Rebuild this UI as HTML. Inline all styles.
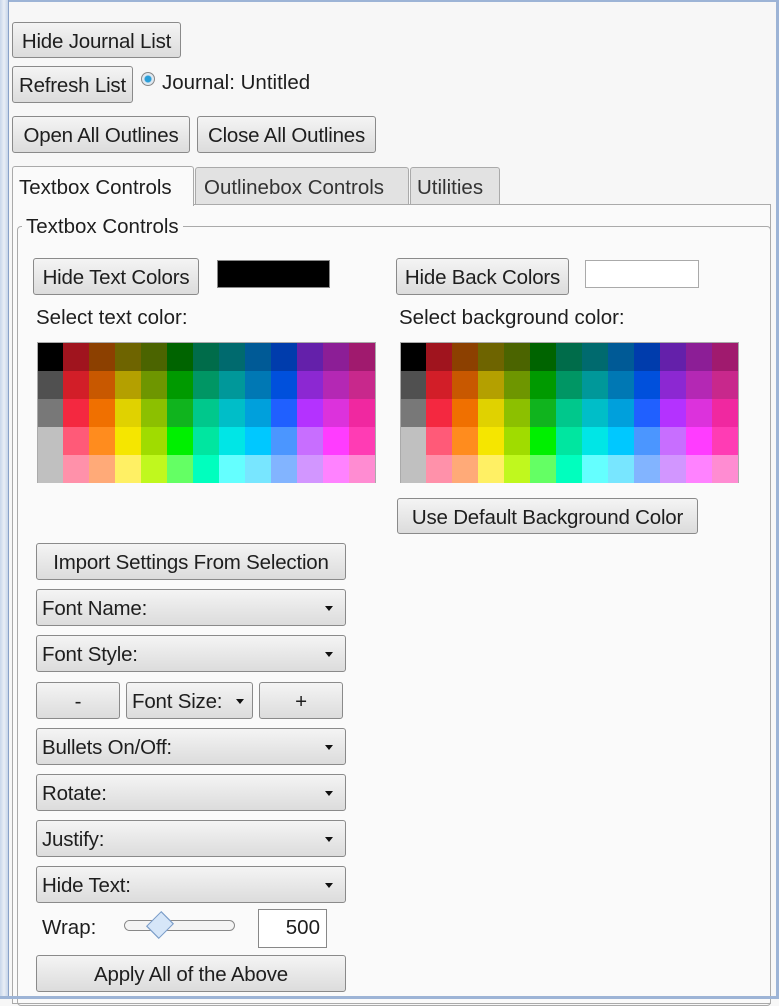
<!DOCTYPE html>
<html><head><meta charset="utf-8"><style>
*{box-sizing:border-box;margin:0;padding:0}
body{width:779px;height:999px;background:#f7f7f7;position:relative;overflow:hidden;font-family:"Liberation Sans",sans-serif;font-size:20.5px;color:#1e1e1e}
.a{position:absolute}
.b{position:absolute;border:1px solid #8a8a8a;border-radius:3px;background:linear-gradient(#f4f4f4,#dcdcdc);display:flex;align-items:center;justify-content:center;white-space:nowrap;padding-top:3px;letter-spacing:-0.2px}
.d{justify-content:space-between;padding:3px 12px 0 5px}
.d:after{content:"";border-left:4px solid transparent;border-right:4px solid transparent;border-top:5px solid #111;margin-top:-2px}
.t{position:absolute;white-space:nowrap}
.g{position:absolute;display:grid;grid-template-columns:25px repeat(12,26px);grid-template-rows:repeat(5,28px);border:1px solid #aaa;width:339px;height:141px}
</style></head><body>
<div class="a" style="left:12px;top:204px;width:759px;height:800px;border:1px solid #aaa;background:#fafafa"></div>
<div class="a" style="left:0;top:0;width:779px;height:2px;background:#9db4d6"></div>
<div class="a" style="left:0;top:0;width:8px;height:999px;background:linear-gradient(90deg,#c8d6ea,#e9eef6 50%,#c8d6ea)"></div>
<div class="a" style="left:8px;top:0;width:1px;height:999px;background:#8aa2c8"></div>
<div class="a" style="left:776px;top:0;width:3px;height:999px;background:#9db4d6"></div>

<div class="b" style="left:12px;top:22px;width:169px;height:36px">Hide Journal List</div>
<div class="b" style="left:12px;top:66px;width:121px;height:37px">Refresh List</div>
<div class="a" style="left:141px;top:72px;width:14px;height:14px;border-radius:50%;border:1px solid #888;background:radial-gradient(circle,#2a9ed8 0 3px,#dfe8f0 4px)"></div>
<div class="t" style="left:162px;top:71px">Journal: Untitled</div>
<div class="b" style="left:12px;top:116px;width:178px;height:37px">Open All Outlines</div>
<div class="b" style="left:197px;top:116px;width:179px;height:37px">Close All Outlines</div>

<div class="a" style="left:12px;top:166px;width:182px;height:40px;border:1px solid #aaa;border-bottom:none;border-radius:3px 3px 0 0;background:#fafafa"></div>
<div class="t" style="left:19px;top:176px">Textbox Controls</div>
<div class="a" style="left:195px;top:167px;width:214px;height:37px;border:1px solid #aaa;border-bottom:none;border-radius:3px 3px 0 0;background:#e2e2e2"></div>
<div class="t" style="left:204px;top:176px;color:#333">Outlinebox Controls</div>
<div class="a" style="left:410px;top:167px;width:90px;height:37px;border:1px solid #aaa;border-bottom:none;border-radius:3px 3px 0 0;background:#e2e2e2"></div>
<div class="t" style="left:417px;top:176px;color:#333">Utilities</div>

<div class="a" style="left:17px;top:226px;width:754px;height:780px;border:1px solid #aaa;border-radius:4px"></div>
<div class="t" style="left:22px;top:215px;background:#fafafa;padding:0 4px">Textbox Controls</div>

<div class="b" style="left:33px;top:258px;width:166px;height:37px">Hide Text Colors</div>
<div class="a" style="left:217px;top:260px;width:113px;height:28px;background:#000;border:1px solid #888"></div>
<div class="b" style="left:396px;top:258px;width:173px;height:37px">Hide Back Colors</div>
<div class="a" style="left:585px;top:260px;width:114px;height:28px;background:#fff;border:1px solid #aaa"></div>
<div class="t" style="left:36px;top:306px">Select text color:</div>
<div class="t" style="left:399px;top:306px">Select background color:</div>

<div class="g" style="left:37px;top:342px" id="g1"></div>
<div class="g" style="left:400px;top:342px" id="g2"></div>

<div class="b" style="left:397px;top:498px;width:301px;height:36px">Use Default Background Color</div>
<div class="b" style="left:36px;top:543px;width:310px;height:37px">Import Settings From Selection</div>
<div class="b d" style="left:36px;top:589px;width:310px;height:37px">Font Name:</div>
<div class="b d" style="left:36px;top:635px;width:310px;height:37px">Font Style:</div>
<div class="b" style="left:36px;top:682px;width:84px;height:37px">-</div>
<div class="b d" style="left:126px;top:682px;width:127px;height:37px;padding-right:8px">Font Size:</div>
<div class="b" style="left:259px;top:682px;width:84px;height:37px">+</div>
<div class="b d" style="left:36px;top:728px;width:310px;height:37px">Bullets On/Off:</div>
<div class="b d" style="left:36px;top:774px;width:310px;height:37px">Rotate:</div>
<div class="b d" style="left:36px;top:820px;width:310px;height:37px">Justify:</div>
<div class="b d" style="left:36px;top:866px;width:310px;height:37px">Hide Text:</div>
<div class="t" style="left:42px;top:916px">Wrap:</div>
<div class="a" style="left:124px;top:920px;width:111px;height:11px;border:1px solid #888;border-radius:6px;background:#f4f4f4"></div>
<div class="a" style="left:151px;top:916px;width:18px;height:18px;transform:rotate(45deg) scaleY(1.2);border:1px solid #7a9cc8;background:#d6e6f8"></div>
<div class="a" style="left:258px;top:909px;width:69px;height:39px;border:1px solid #888;background:#fff;text-align:right;padding:6px 6px 0 0">500</div>
<div class="b" style="left:36px;top:955px;width:310px;height:37px">Apply All of the Above</div>
<div class="a" style="left:0;top:996px;width:779px;height:3px;background:#9db4d6"></div>

<script>
var rows=[
["#000","#a0141e","#8c4000","#6e6400","#4b6400","#006400","#006c4a","#006a6e","#005a96","#003cac","#6420aa","#8c1e96","#a01a6e"],
["#505050","#d21e28","#c85800","#b4a000","#6e9600","#009a00","#009664","#00989a","#0078b4","#0050dc","#8c28d2","#b428b4","#c8288c"],
["#787878","#f42840","#f07000","#e0d200","#8cc000","#10b41e","#00c88c","#00bec8","#00a0dc","#2060ff","#b432ff","#dc32dc","#f028a0"],
["#c0c0c0","#ff5a78","#ff8c1e","#f5e600","#a0dc00","#00f000","#00e6a0","#00e6e6","#00c8ff","#4b96ff","#c86eff","#ff3cff","#ff3cb4"],
["#c0c0c0","#ff91aa","#ffaa78","#fff064","#c0f81e","#64ff64","#00ffbe","#64ffff","#78e6ff","#82b4ff","#d296ff","#ff82ff","#ff8cd2"]];
["g1","g2"].forEach(function(id){var h="";rows.forEach(function(r){r.forEach(function(c){h+='<div style="background:'+c+'"></div>'})});document.getElementById(id).innerHTML=h;});
</script>
</body></html>
